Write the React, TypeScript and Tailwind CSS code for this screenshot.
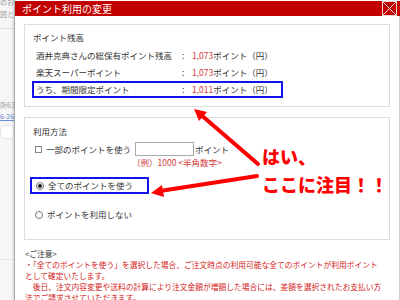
import React from "react";

const jp = "font-['Noto_Sans_CJK_JP','Noto_Sans',sans-serif]";

function BalanceRow({ label, value, hot }: { label: string; value: string; hot?: boolean }) {
	return (
		<div
			className={`ml-[7px] mr-[106px] h-[17px] flex items-center pl-[2px] border-2 ${
				hot ? "border-[#1414e6]" : "border-transparent"
			}`}
		>
			<span className="w-[146px] whitespace-nowrap">{label}</span>
			<span className="w-[10px]">:</span>
			<span className="text-[#d23a3a]">{value}</span>
			<span>ポイント（円）</span>
		</div>
	);
}

export default function App() {
	return (
		<div className={`relative w-[400px] h-[300px] overflow-hidden flex bg-white text-[#333] ${jp}`}>
			{/* page behind the dialog */}
			<div className="w-[14px] shrink-0 bg-[#f6f6f6] text-[7px] leading-[9px] text-[#999] overflow-hidden whitespace-nowrap">
				<div className="-mt-[2px]">のお</div>
				<div className="mt-[3px]">図と</div>
				<div className="mt-[9px] border-t border-[#e2e2e2]" />
				<div className="mt-[72px]">所63</div>
				<div className="mt-[2px] text-[#6b8fd6] underline">6-26</div>
				<div className="mt-[4px] h-[14px] rounded-sm border border-[#e6e6e6] bg-white" />
				<div className="mt-[120px] border-t border-[#e6e6e6]" />
			</div>

			{/* dialog */}
			<div className="flex-1 flex flex-col border-l border-[#a9a9a9] shadow-[-1px_0_2px_rgba(0,0,0,0.15)]">
				<div className="mt-[1px] h-[22px] bg-[#c20000] flex items-center justify-between pl-[7px] pr-[3px]">
					<span className="text-white text-[10px] leading-none">ポイント利用の変更</span>
					<svg width="15" height="15" viewBox="0 0 15 15">
						<rect x="0.5" y="0.5" width="14" height="14" fill="none" stroke="#f3d6d6" strokeWidth="1" />
						<path d="M1 1 L14 14 M14 1 L1 14" stroke="#f3d6d6" strokeWidth="1" />
					</svg>
				</div>

				<div className="flex-1 px-[9px] pt-[8px] border-r border-[#d0d0d0] text-[8.5px]">
					{/* balance */}
					<div className="border border-[#dcdcdc] h-[83px]">
						<div className="mt-[6px] ml-[8px] h-[13px] leading-[13px]">ポイント残高</div>
						<div className="mt-[3px]">
							<BalanceRow label="酒井克典さんの総保有ポイント残高" value="1,073" />
							<BalanceRow label="楽天スーパーポイント" value="1,073" />
							<BalanceRow label="うち、期間限定ポイント" value="1,011" hot />
						</div>
					</div>

					{/* usage */}
					<div className="mt-[10px] border border-[#dcdcdc] h-[123px]">
						<div className="mt-[7px] ml-[8px] h-[13px] leading-[13px]">利用方法</div>
						<div className="mt-[4px] h-[14px] flex items-center pl-[10px]">
							<span className="w-[7px] h-[7px] border border-[#888] bg-white" />
							<span className="ml-[4px] w-[86px] whitespace-nowrap">一部のポイントを使う</span>
							<span className="ml-[3px] w-[59px] h-[14px] border border-[#aaa] bg-white" />
							<span className="ml-[1px]">ポイント</span>
						</div>
						<div className="h-[12px] leading-[12px] pl-[107px] text-[#d23a3a] whitespace-nowrap">
							（例）1000 &lt;半角数字&gt;
						</div>
						<div className="mt-[9px] ml-[5px] w-[119px] h-[17px] border-2 border-[#1414e6] flex items-center pl-[4px]">
							<span className="w-[8px] h-[8px] rounded-full border border-[#777] flex items-center justify-center">
								<span className="w-[4px] h-[4px] rounded-full bg-[#222]" />
							</span>
							<span className="ml-[4px] whitespace-nowrap">全てのポイントを使う</span>
						</div>
						<div className="mt-[14px] h-[13px] flex items-center pl-[10px]">
							<span className="w-[8px] h-[8px] rounded-full border border-[#777] bg-white" />
							<span className="ml-[4px] whitespace-nowrap">ポイントを利用しない</span>
						</div>
					</div>

					{/* notice */}
					<div className="mt-[8px] ml-[1px] text-[7.75px] leading-[11px] whitespace-nowrap">
						<div>&lt;ご注意&gt;</div>
						<div className="text-[#d42020]">
							<div>・「全てのポイントを使う」を選択した場合、ご注文時点の利用可能な全てのポイントが利用ポイント</div>
							<div>として確定いたします。</div>
							<div>　後日、注文内容変更や送料の計算により注文金額が増額した場合には、差額を選択されたお支払い方</div>
							<div>法でご請求させていただきます。</div>
						</div>
					</div>
				</div>
			</div>

			{/* annotation drawn over the screenshot */}
			<svg className="absolute inset-0 pointer-events-none" width="400" height="300" viewBox="0 0 400 300">
				<path d="M258 164 L200 114" stroke="#ff0000" strokeWidth="4" strokeLinecap="round" />
				<polygon points="194,109 207,112 199,121" fill="#ff0000" />
				<path d="M257 176 L160 191" stroke="#ff0000" strokeWidth="4" strokeLinecap="round" />
				<polygon points="151,193 162,185 164,197" fill="#ff0000" />
			</svg>
			<div className="absolute left-[262px] top-[142px] text-[18px] leading-[28px] font-black text-[#ff0000] whitespace-nowrap">
				<div>はい、</div>
				<div>ここに注目！！</div>
			</div>
		</div>
	);
}
